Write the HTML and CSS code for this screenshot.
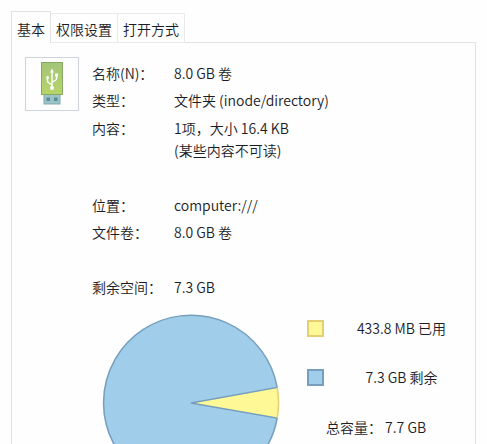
FILE: index.html
```
<!DOCTYPE html>
<html lang="zh-CN">
<head>
    <meta charset="UTF-8">
    <title>属性</title>
    <link rel="stylesheet" href="styles.css">
</head>
<body>
    <div class="tabs">
        <div class="tab active">基本</div>
        <div class="tab">权限设置</div>
        <div class="tab">打开方式</div>
    </div>
    <div class="panel">
        <div class="top">
            <div class="icon">
                <svg width="24" height="44" viewBox="0 0 24 44">
                    <defs>
                        <linearGradient id="body" x1="0" y1="0" x2="0" y2="1">
                            <stop offset="0" stop-color="#a3c578"/>
                            <stop offset="1" stop-color="#b6d468"/>
                        </linearGradient>
                    </defs>
                    <rect x="4" y="32" width="16" height="10" fill="#9cc3c6" stroke="#80aaad"/>
                    <rect x="6.500" y="35.500" width="3.500" height="3.500" fill="#5b8f98"/>
                    <rect x="14" y="35.500" width="3.500" height="3.500" fill="#5b8f98"/>
                    <rect x="1.500" y="0.500" width="21" height="32" fill="url(#body)" stroke="#86aa62"/>
                    <path d="M12 26V10M12 23L7.500 20V16M12 20.500L16.500 17.500V13" fill="none" stroke="#fff" stroke-width="1.400"/>
                    <path d="M12 6.500L14 10.500H10Z" fill="#fff"/>
                    <circle cx="12" cy="26" r="2" fill="#fff"/>
                    <circle cx="7.500" cy="15.500" r="1.500" fill="#fff"/>
                    <rect x="15" y="11.500" width="3" height="3" fill="#fff"/>
                </svg>
            </div>
            <div class="info">
                <div>名称(N)：</div>
                <div>8.0 GB 卷</div>
                <div>类型：</div>
                <div>文件夹 (inode/directory)</div>
                <div>内容：</div>
                <div>1项，大小 16.4 KB<br>(某些内容不可读)</div>
                <div class="gap">位置：</div>
                <div class="gap">computer:///</div>
                <div>文件卷：</div>
                <div>8.0 GB 卷</div>
                <div class="gap">剩余空间：</div>
                <div class="gap">7.3 GB</div>
            </div>
        </div>
        <div class="usage">
            <svg class="pie" width="178" height="178" viewBox="0 0 178 178">
                <circle cx="89" cy="89" r="87.500" fill="#a0cde9"/>
                <path d="M89 89L175.200 73.500A87.500 87.500 0 0 1 175.200 104Z" fill="#fff897"/>
                <path d="M89 89L175.200 73.500A87.500 87.500 0 1 0 175.200 104Z" fill="none" stroke="#759fbd" stroke-width="1.500"/>
                <path d="M175.200 73.500A87.500 87.500 0 0 1 175.200 104" fill="none" stroke="#e8cf72" stroke-width="1.500"/>
            </svg>
            <div class="legend">
                <div class="legend-item">
                    <span class="box used"></span>
                    <span class="label">433.8 MB 已用</span>
                </div>
                <div class="legend-item">
                    <span class="box free"></span>
                    <span class="label">7.3 GB 剩余</span>
                </div>
                <div class="total">总容量： 7.7 GB</div>
            </div>
        </div>
    </div>
</body>
</html>
```
FILE: styles.css
```
body {
    margin: 0;
    padding: 11px 11px 0;
    height: 444px;
    box-sizing: border-box;
    overflow: hidden;
    background-color: #fefefe;
    color: #1c1c26;
    font-family: "Noto Sans CJK SC", sans-serif;
    font-size: 14px;
    font-weight: 350;
    line-height: 22px;
}
.tabs {
    display: flex;
    align-items: flex-end;
    height: 32px;
}
.tab {
    box-sizing: border-box;
    width: 67px;
    height: 30px;
    padding-top: 4px;
    border: 1px solid #eaeaed;
    border-left: none;
    text-align: center;
    white-space: nowrap;
}
.tab.active {
    width: 40px;
    height: 32px;
    padding-top: 6px;
    border: 1px solid #e2e2e5;
    border-bottom: none;
    z-index: 1;
    background-color: #fefefe;
}
.panel {
    box-sizing: border-box;
    width: 465px;
    height: 402px;
    margin-top: -1px;
    border: 1px solid #e2e2e5;
    border-bottom: none;
    overflow: hidden;
}
.top {
    display: flex;
    padding: 14px 0 0 13px;
}
.icon {
    box-sizing: border-box;
    width: 54px;
    height: 54px;
    padding-top: 4px;
    border: 1px solid #cfd3dc;
    text-align: center;
}
.icon svg {
    display: block;
    margin: 0 auto;
}
.info {
    display: grid;
    grid-template-columns: 82px auto;
    row-gap: 5.45px;
    margin-left: 13px;
    padding-top: 5px;
}
.gap {
    margin-top: 27.5px;
}
.usage {
    display: flex;
    margin-top: 15.75px;
    padding-left: 90px;
}
.pie {
    flex: none;
}
.legend {
    width: 150px;
    margin-left: 27px;
    padding-top: 4px;
}
.legend-item {
    display: flex;
    align-items: center;
    height: 22px;
    margin-bottom: 27px;
}
.box {
    box-sizing: border-box;
    width: 17px;
    height: 17px;
    border: 2px solid;
}
.used {
    background-color: #fff897;
    border-color: #e3cf72;
}
.free {
    background-color: #a0cde9;
    border-color: #759fbd;
}
.label {
    flex: 1;
    margin: -2px 0 0 22px;
    text-align: center;
}
.total {
    padding-left: 19px;
}
```
